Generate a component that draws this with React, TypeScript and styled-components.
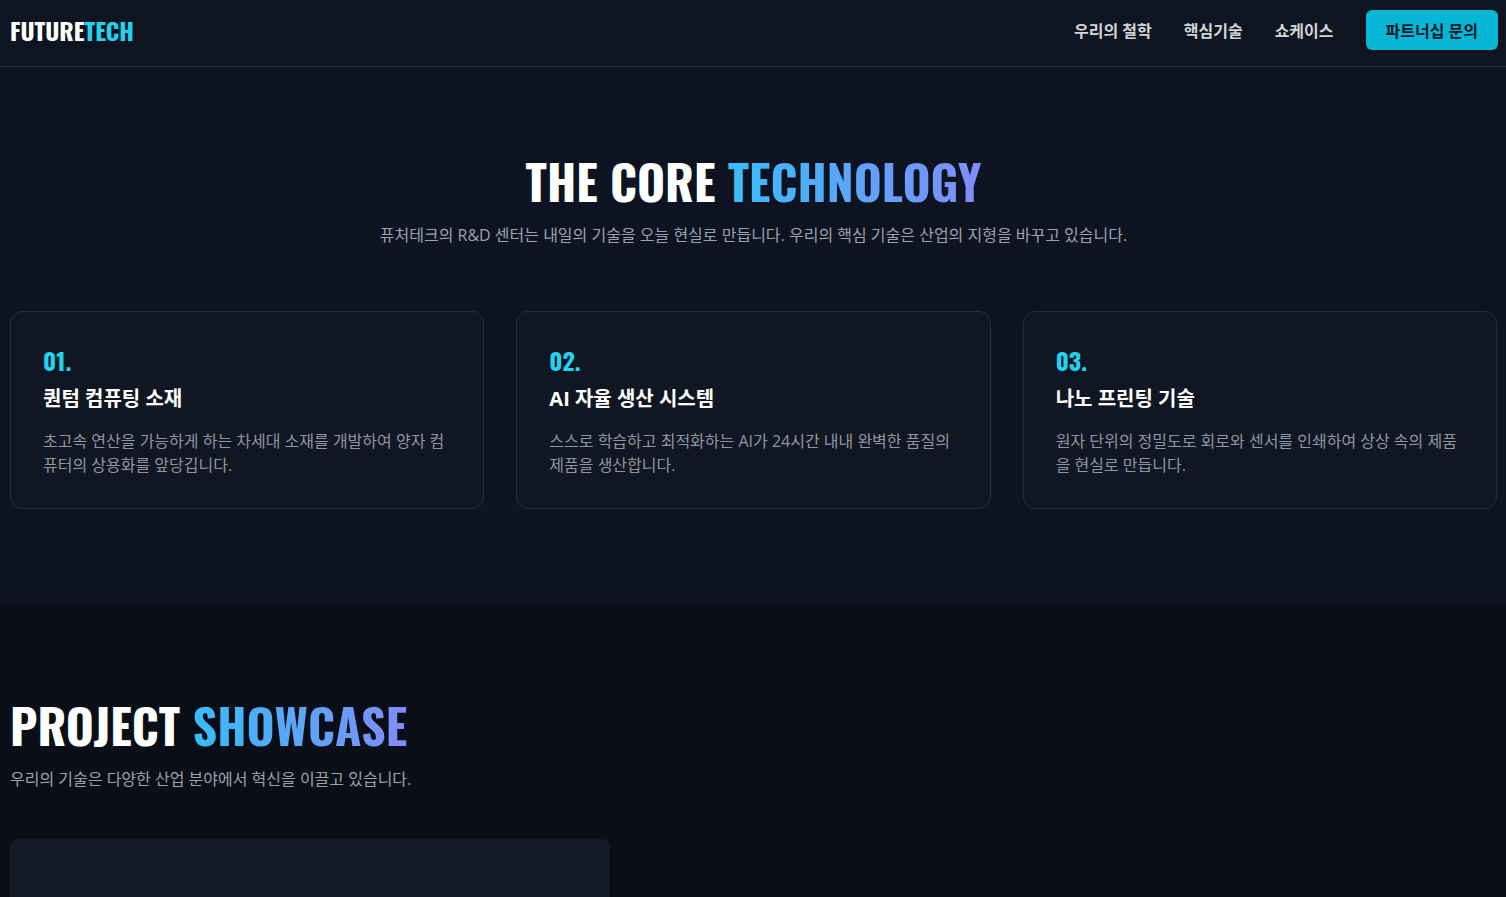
import React from "react";
import styled, { createGlobalStyle } from "styled-components";

const display = `Oswald, "Open Sans Condensed", "Roboto Condensed", "Liberation Sans Narrow", sans-serif`;

const GlobalStyle = createGlobalStyle`
  *, *::before, *::after { box-sizing: border-box; }
  body {
    margin: 0;
    background: #0a0e17;
    color: #ffffff;
    font: 400 16px/24px "Open Sans", "Noto Sans CJK KR", sans-serif;
  }
  h2, h3, p { margin: 0; }
`;

const Page = styled.div`
  height: 100vh;
  overflow: hidden;
`;

const Header = styled.header`
  display: flex;
  align-items: center;
  justify-content: space-between;
  padding: 10px 8px 16px 10px;
  background: #0e1420;
  border-bottom: 1px solid #272d39;
`;

const Logo = styled.a`
  color: #ffffff;
  font: 700 24px/40px ${display};
  text-decoration: none;
`;

const Cyan = styled.span`
  color: #22d3ee;
`;

const Nav = styled.nav`
  display: flex;
  align-items: center;
  gap: 32px;
`;

const NavLink = styled.a`
  padding-top: 2px;
  color: #d1d5db;
  font-weight: 700;
  text-decoration: none;
`;

const ContactButton = styled.button`
  padding: 9px 20px 7px;
  border: 0;
  border-radius: 6px;
  background: #06b6d4;
  color: #0a1a29;
  font: inherit;
  font-weight: 700;
  cursor: pointer;
`;

const Section = styled.section<{ $tone: "navy" | "dark" }>`
  padding: ${(p) => (p.$tone === "navy" ? "90px 9px 96px 10px" : "96px 9px 96px 10px")};
  background: ${(p) => (p.$tone === "navy" ? "#0d1320" : "#0a0e17")};
`;

const Intro = styled.div<{ $centered?: boolean }>`
  margin-bottom: ${(p) => (p.$centered ? 62 : 46)}px;
  text-align: ${(p) => (p.$centered ? "center" : "left")};
`;

const Heading = styled.h2`
  margin-bottom: 16px;
  font: 700 48px/48px ${display};
`;

const Gradient = styled.span`
  background: linear-gradient(to right, #38bdf8, #818cf8);
  background-clip: text;
  -webkit-background-clip: text;
  color: transparent;
`;

const Lead = styled.p`
  color: #9ca3af;
  line-height: 28px;
`;

const CardGrid = styled.div`
  display: grid;
  grid-template-columns: repeat(3, minmax(0, 1fr));
  gap: 32px;
`;

const Card = styled.article`
  padding: 32px 32px 31px;
  border: 1px solid #272d38;
  border-radius: 12px;
  background: #101722;
`;

const CardNumber = styled.p`
  margin-bottom: 9px;
  color: #22d3ee;
  font: 700 24px/32px ${display};
`;

const CardTitle = styled.h3`
  margin-bottom: 16px;
  font-size: 20px;
  line-height: 28px;
  font-weight: 700;
`;

const CardText = styled.p`
  color: #8f96a3;
  word-break: break-all;
`;

const ShowcaseTile = styled.div`
  max-width: 600px;
  height: 400px;
  border-radius: 8px;
  background: #121927;
`;

const technologies = [
  {
    number: "01.",
    title: "퀀텀 컴퓨팅 소재",
    text: "초고속 연산을 가능하게 하는 차세대 소재를 개발하여 양자 컴퓨터의 상용화를 앞당깁니다.",
  },
  {
    number: "02.",
    title: "AI 자율 생산 시스템",
    text: "스스로 학습하고 최적화하는 AI가 24시간 내내 완벽한 품질의 제품을 생산합니다.",
  },
  {
    number: "03.",
    title: "나노 프린팅 기술",
    text: "원자 단위의 정밀도로 회로와 센서를 인쇄하여 상상 속의 제품을 현실로 만듭니다.",
  },
];

export default function App() {
  return (
    <Page>
      <GlobalStyle />
      <Header>
        <Logo href="#">
          FUTURE<Cyan>TECH</Cyan>
        </Logo>
        <Nav>
          <NavLink href="#philosophy">우리의 철학</NavLink>
          <NavLink href="#technology">핵심기술</NavLink>
          <NavLink href="#showcase">쇼케이스</NavLink>
          <ContactButton type="button">파트너십 문의</ContactButton>
        </Nav>
      </Header>
      <main>
        <Section id="technology" $tone="navy">
          <Intro $centered>
            <Heading>
              THE CORE <Gradient>TECHNOLOGY</Gradient>
            </Heading>
            <Lead>
              퓨처테크의 R&amp;D 센터는 내일의 기술을 오늘 현실로 만듭니다. 우리의 핵심 기술은 산업의 지형을 바꾸고 있습니다.
            </Lead>
          </Intro>
          <CardGrid>
            {technologies.map((item) => (
              <Card key={item.number}>
                <CardNumber>{item.number}</CardNumber>
                <CardTitle>{item.title}</CardTitle>
                <CardText>{item.text}</CardText>
              </Card>
            ))}
          </CardGrid>
        </Section>
        <Section id="showcase" $tone="dark">
          <Intro>
            <Heading>
              PROJECT <Gradient>SHOWCASE</Gradient>
            </Heading>
            <Lead>우리의 기술은 다양한 산업 분야에서 혁신을 이끌고 있습니다.</Lead>
          </Intro>
          <ShowcaseTile />
        </Section>
      </main>
    </Page>
  );
}
